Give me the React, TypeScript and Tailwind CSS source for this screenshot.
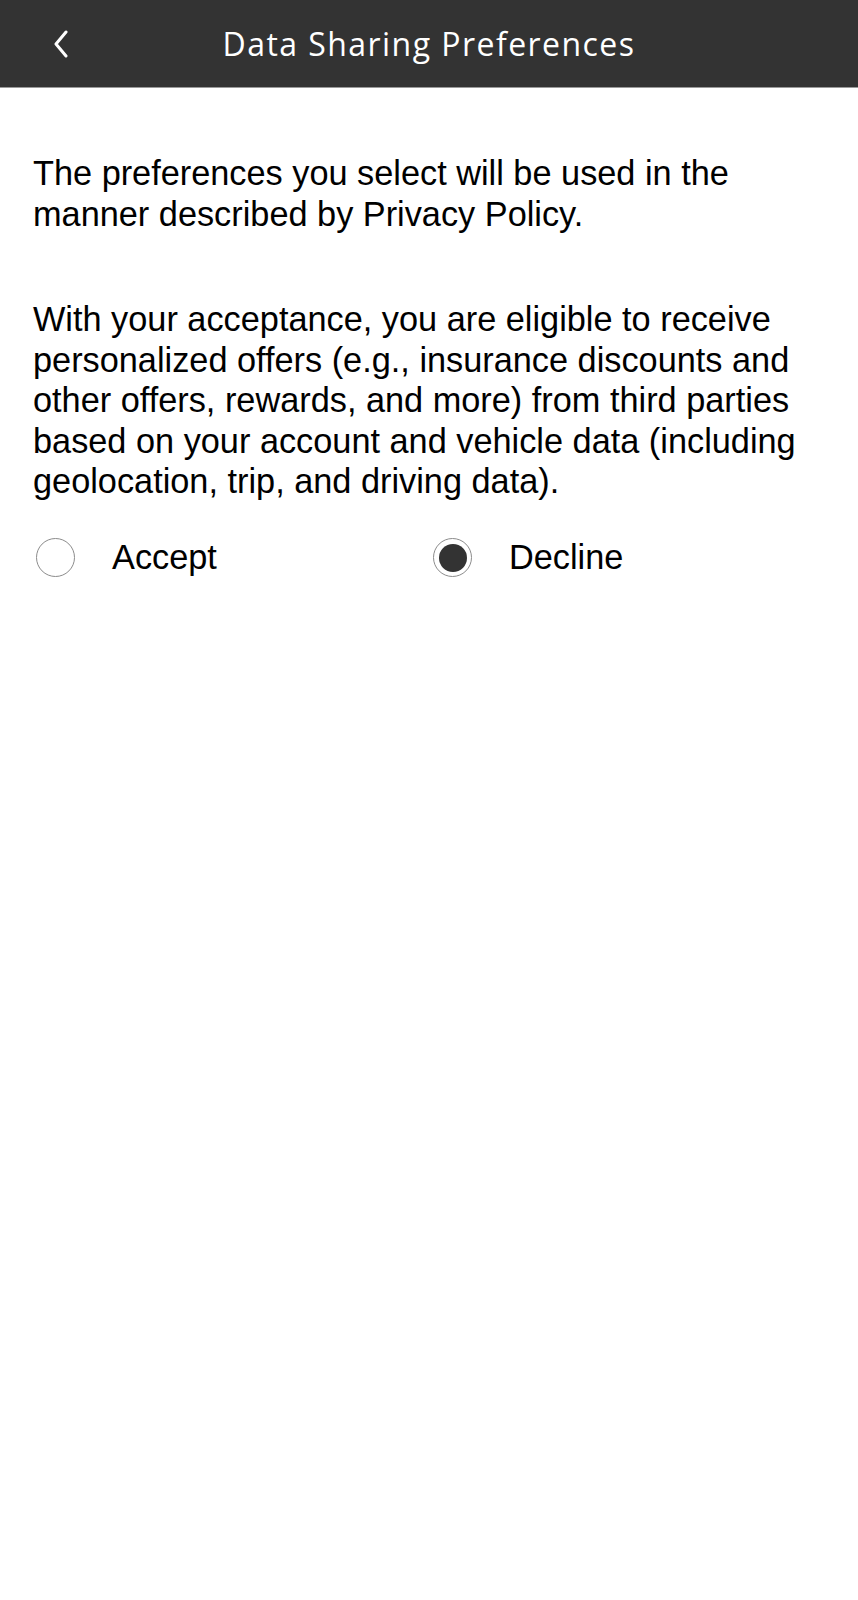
import React from "react";

function Radio({ checked }: { checked: boolean }) {
  return (
    <div className="w-[39px] h-[39px] rounded-full border-[1.5px] border-[#8c8c8c] flex items-center justify-center shrink-0">
      {checked && <div className="w-[28px] h-[28px] rounded-full bg-[#333333]" />}
    </div>
  );
}

export default function App() {
  return (
    <div className="w-[858px] min-h-[1600px] bg-white">
      <header className="h-[88px] bg-[#333333] border-b border-[#9a9a9a] flex items-center relative">
        <div className="w-[120px] pl-[52px] flex items-center">
          <svg width="18" height="28" viewBox="0 0 18 28" fill="none">
            <polyline points="14,2 4,14 14,26" stroke="white" strokeWidth="3" strokeLinecap="round" strokeLinejoin="round" />
          </svg>
        </div>
        <h1
          className="flex-1 text-center pr-[120px] text-white text-[32px] tracking-[1.45px]"
          style={{ fontFamily: '"Open Sans", sans-serif' }}
        >
          Data Sharing Preferences
        </h1>
      </header>
      <main
        className="px-[33px] pt-[65px] text-black text-[34.3px] leading-[40.5px]"
        style={{ fontFamily: '"Liberation Sans", Arial, sans-serif' }}
      >
        <p>
          The preferences you select will be used in the
          <br />
          manner described by Privacy Policy.
        </p>
        <p className="mt-[65px]">
          With your acceptance, you are eligible to receive
          <br />
          personalized offers (e.g., insurance discounts and
          <br />
          other offers, rewards, and more) from third parties
          <br />
          based on your account and vehicle data (including
          <br />
          geolocation, trip, and driving data).
        </p>
        <div className="grid grid-cols-2 mt-[36px]">
          <label className="flex items-center gap-[37px] pl-[3px] h-[40px]">
            <Radio checked={false} />
            <span>Accept</span>
          </label>
          <label className="flex items-center gap-[37px] pl-[4px] h-[40px]">
            <Radio checked={true} />
            <span>Decline</span>
          </label>
        </div>
      </main>
    </div>
  );
}
